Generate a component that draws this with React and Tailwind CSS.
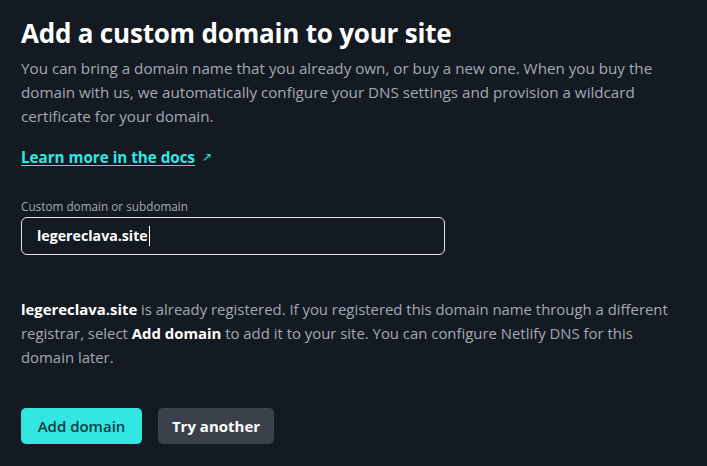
export default function App() {
  return (
    <div className="min-h-screen w-full bg-[#141a22] font-['Open_Sans',sans-serif] text-[#a3a9b4]">
      <div className="px-[21px] pt-[14px]">
        <h1 className="text-[26px] font-bold leading-[38px] text-white tracking-[-0.2px]">
          Add a custom domain to your site
        </h1>
        <p className="mt-[4px] max-w-[668px] text-[15.2px] leading-[24px]">
          You can bring a domain name that you already own, or buy a new one. When you buy the domain with us, we
          automatically configure your DNS settings and provision a wildcard certificate for your domain.
        </p>
        <div className="mt-[17px] flex items-center gap-[7px] text-[15.2px] leading-[24px]">
          <a href="#" className="font-bold text-[#32e6e2] underline underline-offset-2">
            Learn more in the docs
          </a>
          <span className="text-[#32e6e2] text-[12px]">↗</span>
        </div>

        <label className="mt-[30px] block text-[11.75px] leading-[14px] text-[#a3a9b4]">
          Custom domain or subdomain
        </label>
        <div className="mt-[4px] flex h-[38px] w-[424px] items-center rounded-[6px] border border-[#e5e7eb] px-[15px]">
          <span className="text-[14.2px] font-bold text-white">legereclava.site</span>
          <span className="ml-[1px] h-[20px] w-[1px] bg-white" />
        </div>

        <p className="mt-[42px] max-w-[668px] text-[14.9px] leading-[24px]">
          <span className="font-bold text-white">legereclava.site</span> is already registered. If you registered this
          domain name through a different registrar, select <span className="font-bold text-white">Add domain</span> to
          add it to your site. You can configure Netlify DNS for this domain later.
        </p>

        <div className="mt-[39px] flex gap-[16px]">
          <button className="h-[36px] w-[121px] rounded-[5px] bg-[#32e6e2] text-[15px] font-semibold text-[#0e3d3f]">
            Add domain
          </button>
          <button className="h-[36px] w-[116px] rounded-[5px] bg-[#3b414b] text-[15px] font-bold text-white">
            Try another
          </button>
        </div>
      </div>
    </div>
  )
}
